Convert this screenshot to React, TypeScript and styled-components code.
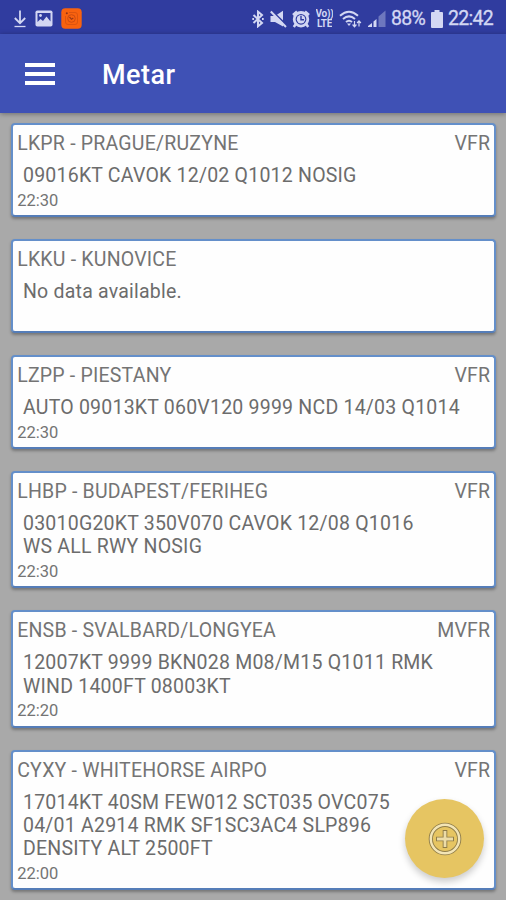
import React from "react";
import styled, { createGlobalStyle } from "styled-components";

const GlobalStyle = createGlobalStyle`
  * { box-sizing: border-box; }
  html, body { margin: 0; padding: 0; }
  body { font-family: Roboto, "Liberation Sans", sans-serif; background: #a9a9a9; overflow: hidden; }
`;

const Screen = styled.div`
  position: relative;
  width: 506px;
  height: 900px;
  overflow: hidden;
  background: #a9a9a9;
`;

const StatusBar = styled.div`
  height: 34px;
  background: #303c9f;
  display: flex;
  align-items: center;
  justify-content: space-between;
  padding: 3px 12px 0 13px;
  color: #d3d7f3;
`;

const StatusGroup = styled.div<{ $gap: number }>`
  display: flex;
  align-items: center;
  gap: ${(p) => p.$gap}px;
  svg { display: block; flex: none; }
`;

const StatusText = styled.span<{ $width: number }>`
  width: ${(p) => p.$width}px;
  font-size: 19.5px;
  line-height: 22px;
  letter-spacing: -0.7px;
  -webkit-text-stroke: 0.3px currentColor;
  white-space: nowrap;
  padding-top: 1px;
`;

const AppBar = styled.header`
  position: relative;
  height: 79px;
  background: #3f51b5;
  display: flex;
  align-items: center;
  padding-left: 25px;
  box-shadow: 0 1px 5px rgba(0, 0, 0, 0.35);
`;

const MenuButton = styled.button`
  width: 30px;
  height: 22px;
  padding: 0;
  border: 0;
  background: none;
  display: flex;
  flex-direction: column;
  justify-content: space-between;
`;

const MenuLine = styled.span`
  align-self: stretch;
  height: 4px;
  background: #fff;
`;

const Title = styled.h1`
  margin: 2px 0 0 47px;
  font-size: 27px;
  line-height: 30px;
  font-weight: 500;
  color: #fff;
  letter-spacing: 0.45px;
`;

const List = styled.main`
  display: flex;
  flex-direction: column;
  gap: 22px;
  padding: 9.7px 10px 0 11px;
`;

const Card = styled.article<{ $lines: number }>`
  height: ${(p) => 70.9 + 23.2 * p.$lines}px;
  background: #fefefe;
  border: 2px solid #648fca;
  border-bottom-color: #557db8;
  border-radius: 4px;
  box-shadow: 0 2px 3px rgba(0, 0, 0, 0.3);
  padding: 7px 4px 0 4.2px;
  color: #747474;
`;

const CardHead = styled.div`
  display: flex;
  justify-content: space-between;
  font-size: 19.5px;
  line-height: 23.2px;
`;

const Station = styled.span`
  letter-spacing: 0.21px;
`;

const Rule = styled.span`
  letter-spacing: 0.1px;
`;

const Report = styled.div`
  margin: 9px 0 0 5.8px;
  font-size: 19.5px;
  line-height: 23.2px;
  color: #6c6c6c;
`;

const ReportLine = styled.div`
  white-space: nowrap;
  letter-spacing: 0.22px;
`;

const Time = styled.div`
  margin-top: 3.5px;
  font-size: 16.5px;
  line-height: 20px;
`;

const AddButton = styled.button`
  position: absolute;
  left: 405px;
  top: 799px;
  width: 79px;
  height: 79px;
  padding: 0;
  border: 0;
  border-radius: 50%;
  background: #e6c562;
  box-shadow: 0 4px 7px rgba(0, 0, 0, 0.2);
  display: flex;
  align-items: center;
  justify-content: center;
`;

const DownloadIcon = () => (
  <svg width="14" height="18" viewBox="0 0 14 18" fill="none" stroke="currentColor">
    <path d="M7 .5V13M1.8 8L7 13.2L12.2 8" strokeWidth="1.8" />
    <path d="M1.5 16.5H12.5" strokeWidth="1.3" />
  </svg>
);

const PictureIcon = () => (
  <svg width="18" height="17" viewBox="0 0 18 17">
    <rect x=".5" y=".5" width="17" height="16" rx="1.8" fill="currentColor" />
    <path d="M2.5 3H15.5V11.5L11.5 6.5L8 11L5.5 9L2.5 12Z" fill="#303c9f" />
    <circle cx="5.5" cy="5.5" r="1.4" fill="currentColor" />
  </svg>
);

const CameraIcon = () => (
  <svg width="21" height="21" viewBox="0 0 21 21" fill="none">
    <rect x=".3" y=".3" width="20.4" height="20.4" rx="4" fill="#f8620f" />
    <path d="M8 4.5H14Q16.5 4.5 16.5 7V14Q16.5 16.5 14 16.5H7Q4.5 16.5 4.5 14V8" stroke="#dc540f" strokeWidth="1" />
    <circle cx="10.5" cy="10.5" r="3.8" stroke="#cc4b12" strokeWidth="1" />
    <circle cx="5.8" cy="5.2" r="1" fill="#8f3218" />
    <path d="M8.5 9L10.5 11.3L12.3 10" stroke="#9b3715" strokeWidth="1.2" />
  </svg>
);

const BluetoothIcon = () => (
  <svg width="12" height="18" viewBox="0 0 12 18" fill="none" stroke="currentColor" strokeWidth="2">
    <path d="M1.5 5L10 13L6 16.3V1.7L10 5L1.5 13" />
    <path d="M.3 9H2M10 9H11.7" />
  </svg>
);

const MuteIcon = () => (
  <svg width="17" height="18" viewBox="0 0 17 18">
    <path d="M.5 6H5L13 .8V16.5L5 12H.5Z" fill="currentColor" />
    <path d="M1.5 .5L17 15.5" stroke="#303c9f" strokeWidth="1.8" />
    <path d="M.8 1.5L16 17" stroke="currentColor" strokeWidth="2" />
  </svg>
);

const AlarmIcon = () => (
  <svg width="18" height="18" viewBox="0 0 18 18" fill="none" stroke="currentColor">
    <circle cx="9" cy="9.3" r="6.8" strokeWidth="2.8" />
    <circle cx="9" cy="9.3" r="4.2" fill="currentColor" stroke="none" />
    <path d="M1 5L5 1.5M13 1.5L17 5M3.8 14L1.8 17M14.2 14L16.2 17" strokeWidth="2.5" />
    <path d="M9 5.8V9.7H12" stroke="#303c9f" strokeWidth="1.4" />
  </svg>
);

const VolteBadge = styled.span`
  width: 18px;
  display: flex;
  flex-direction: column;
  align-items: center;
  font-size: 10px;
  line-height: 9.4px;
  font-weight: 700;
  letter-spacing: -0.3px;
`;

const VolteLine = styled.span`
  display: block;
  height: 9.4px;
  overflow: hidden;
  white-space: nowrap;
`;

const WifiIcon = () => (
  <svg width="23" height="18" viewBox="0 0 23 18" fill="none" stroke="currentColor" strokeWidth="2">
    <path d="M1 5.8Q10 -2.2 19 5.8M4 9Q10 3.8 16 9M7 12Q10 9.5 13 12" />
    <path d="M8 13.5H12L10 16Z" fill="currentColor" stroke="none" />
    <path d="M15.5 11V16.5M13.6 14.5L15.5 16.8L17.4 14.5M20 16.5V11M18.1 13L20 10.8L21.9 13" strokeWidth="1.2" />
  </svg>
);

const SignalIcon = () => (
  <svg width="18" height="17" viewBox="0 0 18 17" fill="currentColor">
    <path d="M0 17V16L4 13V17Z" />
    <path d="M5.5 17V11.5L8.5 9V17Z" />
    <path d="M10.5 17V6.5L17.5 .5V17Z" opacity=".38" />
  </svg>
);

const BatteryIcon = () => (
  <svg width="12" height="18" viewBox="0 0 12 18" fill="currentColor">
    <path d="M3.5 0H8.5V2H11Q12 2 12 3V17Q12 18 11 18H1Q0 18 0 17V3Q0 2 1 2H3.5Z" />
  </svg>
);

const PlusIcon = () => (
  <svg width="34" height="34" viewBox="0 0 34 34" fill="none">
    <circle cx="17" cy="17" r="14.2" stroke="#8e7c48" strokeWidth="4.2" />
    <circle cx="17" cy="17" r="14.2" stroke="#f3e5b5" strokeWidth="2.4" />
    <path d="M17 8V26M8 17H26" stroke="#8e7c48" strokeWidth="4.6" />
    <path d="M17 9V25M9 17H25" stroke="#eddda8" strokeWidth="2.8" />
  </svg>
);

interface Metar {
  station: string;
  rule?: string;
  report: string[];
  time?: string;
}

const metars: Metar[] = [
  { station: "LKPR - PRAGUE/RUZYNE", rule: "VFR", report: ["09016KT CAVOK 12/02 Q1012 NOSIG"], time: "22:30" },
  { station: "LKKU - KUNOVICE", report: ["No data available."] },
  { station: "LZPP - PIESTANY", rule: "VFR", report: ["AUTO 09013KT 060V120 9999 NCD 14/03 Q1014"], time: "22:30" },
  { station: "LHBP - BUDAPEST/FERIHEG", rule: "VFR", report: ["03010G20KT 350V070 CAVOK 12/08 Q1016", "WS ALL RWY NOSIG"], time: "22:30" },
  { station: "ENSB - SVALBARD/LONGYEA", rule: "MVFR", report: ["12007KT 9999 BKN028 M08/M15 Q1011 RMK", "WIND 1400FT 08003KT"], time: "22:20" },
  {
    station: "CYXY - WHITEHORSE AIRPO",
    rule: "VFR",
    report: ["17014KT 40SM FEW012 SCT035 OVC075", "04/01 A2914 RMK SF1SC3AC4 SLP896", "DENSITY ALT 2500FT"],
    time: "22:00",
  },
];

export default function App() {
  return (
    <Screen>
      <GlobalStyle />
      <StatusBar>
        <StatusGroup $gap={8}>
          <DownloadIcon />
          <PictureIcon />
          <CameraIcon />
        </StatusGroup>
        <StatusGroup $gap={5.5}>
          <BluetoothIcon />
          <MuteIcon />
          <AlarmIcon />
          <VolteBadge><VolteLine>Vo))</VolteLine><VolteLine>LTE</VolteLine></VolteBadge>
          <WifiIcon />
          <SignalIcon />
          <StatusText $width={34}>88%</StatusText>
          <BatteryIcon />
          <StatusText $width={46}>22:42</StatusText>
        </StatusGroup>
      </StatusBar>
      <AppBar>
        <MenuButton aria-label="Menu"><MenuLine /><MenuLine /><MenuLine /></MenuButton>
        <Title>Metar</Title>
      </AppBar>
      <List>
        {metars.map((m) => (
          <Card key={m.station} $lines={m.report.length}>
            <CardHead>
              <Station>{m.station}</Station>
              {m.rule && <Rule>{m.rule}</Rule>}
            </CardHead>
            <Report>
              {m.report.map((line) => <ReportLine key={line}>{line}</ReportLine>)}
            </Report>
            {m.time && <Time>{m.time}</Time>}
          </Card>
        ))}
      </List>
      <AddButton aria-label="Add"><PlusIcon /></AddButton>
    </Screen>
  );
}
